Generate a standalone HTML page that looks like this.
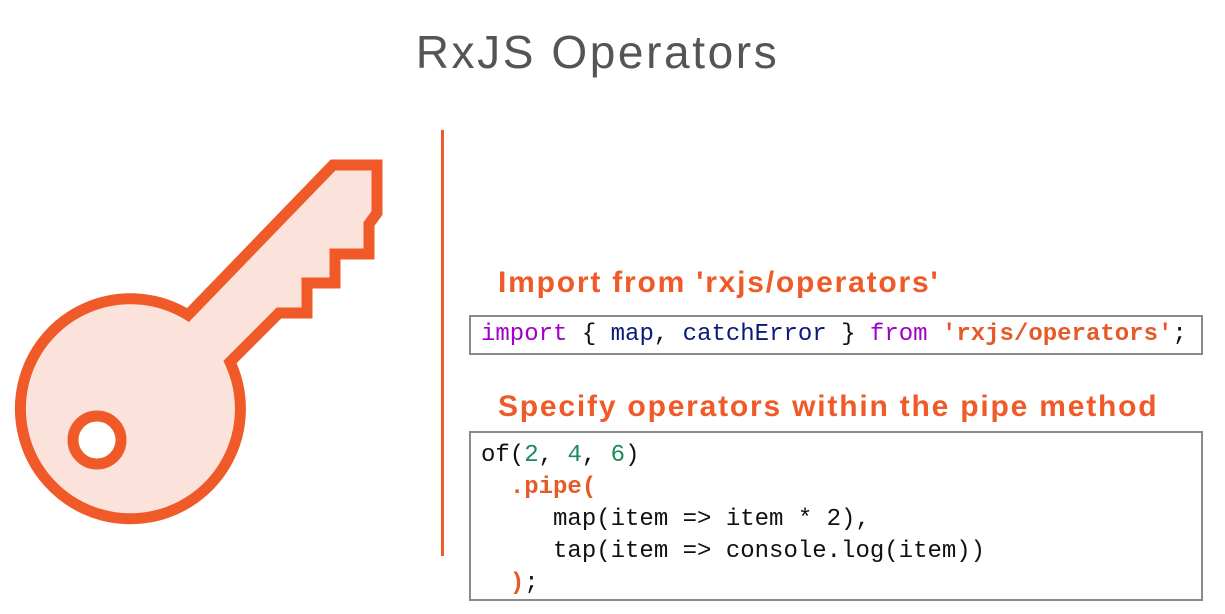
<!DOCTYPE html>
<html><head><meta charset="utf-8"><style>
body{margin:0;width:1225px;height:614px;background:#fff;position:relative;overflow:hidden;font-family:"Liberation Sans",sans-serif}
.t{position:absolute;left:0;width:1195px;text-align:center;top:25px;font-size:46px;color:#555;font-weight:300;letter-spacing:2.6px}
.h{position:absolute;left:498px;font-size:30px;font-weight:bold;color:#f05a28;letter-spacing:1.8px}
.box{position:absolute;left:469px;width:734px;border:2px solid #8a8a8a;box-sizing:border-box;font-family:"Liberation Mono",monospace;font-size:24px;color:#111}
pre{margin:0;font:inherit;line-height:32px}
.k{color:#a000c8}.v{color:#0a1a7a}.s{color:#e55a28;font-weight:bold}.n{color:#1a8a5a}
</style></head><body>
<div class="t">RxJS Operators</div>
<svg width="420" height="560" style="position:absolute;left:0;top:0">
<path d="M188,315 L333,165 L377,165 L377,213 L369,224 L369,254 L335,254 L335,283 L307,283 L307,313 L279,313 L230,362 A110,110 0 1,1 188,315 Z" fill="#fbe3dc" stroke="#f05a28" stroke-width="11" stroke-linejoin="miter"/>
<circle cx="97" cy="440" r="24" fill="#fff" stroke="#f05a28" stroke-width="11"/>
</svg>
<div style="position:absolute;left:441px;top:130px;width:3px;height:426px;background:#f05a28"></div>
<div class="h" style="top:266px">Import from 'rxjs/operators'</div>
<div class="box" style="top:315px;height:40px;padding:2px 0 0 10px"><pre><span class="k">import</span> { <span class="v">map</span>, <span class="v">catchError</span> } <span class="k">from</span> <span class="s">'rxjs/operators'</span>;</pre></div>
<div class="h" style="top:390px">Specify operators within the pipe method</div>
<div class="box" style="top:431px;height:170px;padding:7px 0 0 10px"><pre>of(<span class="n">2</span>, <span class="n">4</span>, <span class="n">6</span>)
  <span class="s">.pipe(</span>
     map(item =&gt; item * 2),
     tap(item =&gt; console.log(item))
  <span class="s">)</span>;</pre></div>
</body></html>
